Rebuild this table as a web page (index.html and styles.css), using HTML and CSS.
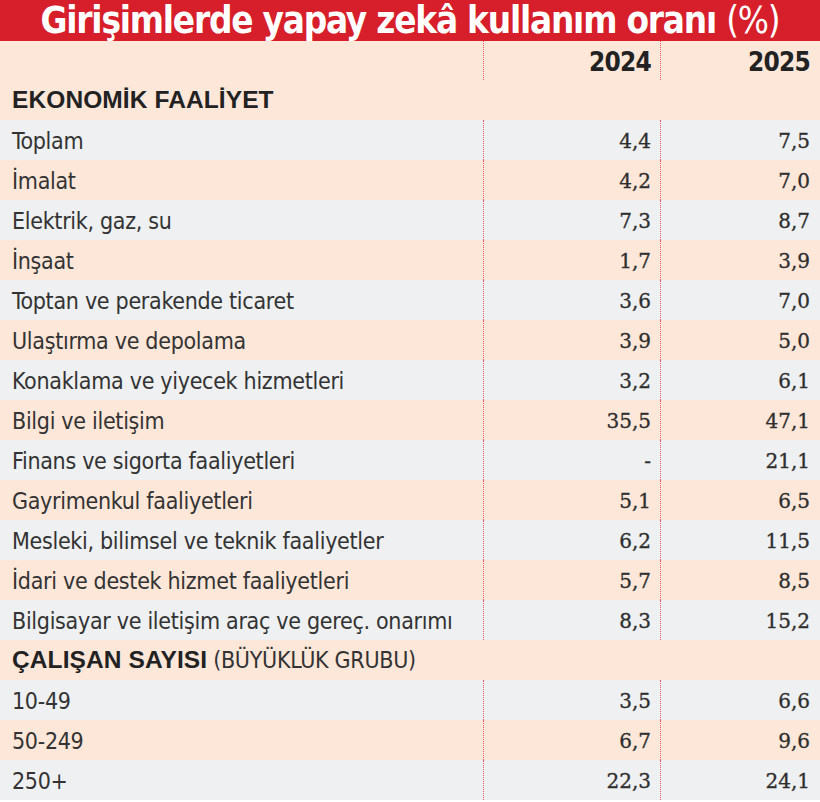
FILE: index.html
```html
<!DOCTYPE html>
<html lang="tr">
<head>
<meta charset="utf-8">
<link rel="stylesheet" href="styles.css">
</head>
<body>
<div class="chart">
  <div class="title">Girişimlerde yapay zekâ kullanım oranı <span class="pct">(%)</span></div>
  <div class="row head peach"><div class="lab"></div><div class="num yr">2024</div><div class="num yr">2025</div></div>
  <div class="row section peach"><div class="lab"><b>EKONOMİK FAALİYET</b></div></div>
  <div class="row gray"><div class="lab">Toplam</div><div class="num">4,4</div><div class="num">7,5</div></div>
  <div class="row peach"><div class="lab">İmalat</div><div class="num">4,2</div><div class="num">7,0</div></div>
  <div class="row gray"><div class="lab">Elektrik, gaz, su</div><div class="num">7,3</div><div class="num">8,7</div></div>
  <div class="row peach"><div class="lab">İnşaat</div><div class="num">1,7</div><div class="num">3,9</div></div>
  <div class="row gray"><div class="lab">Toptan ve perakende ticaret</div><div class="num">3,6</div><div class="num">7,0</div></div>
  <div class="row peach"><div class="lab">Ulaştırma ve depolama</div><div class="num">3,9</div><div class="num">5,0</div></div>
  <div class="row gray"><div class="lab">Konaklama ve yiyecek hizmetleri</div><div class="num">3,2</div><div class="num">6,1</div></div>
  <div class="row peach"><div class="lab">Bilgi ve iletişim</div><div class="num">35,5</div><div class="num">47,1</div></div>
  <div class="row gray"><div class="lab">Finans ve sigorta faaliyetleri</div><div class="num">-</div><div class="num">21,1</div></div>
  <div class="row peach"><div class="lab">Gayrimenkul faaliyetleri</div><div class="num">5,1</div><div class="num">6,5</div></div>
  <div class="row gray"><div class="lab">Mesleki, bilimsel ve teknik faaliyetler</div><div class="num">6,2</div><div class="num">11,5</div></div>
  <div class="row peach"><div class="lab">İdari ve destek hizmet faaliyetleri</div><div class="num">5,7</div><div class="num">8,5</div></div>
  <div class="row gray"><div class="lab">Bilgisayar ve iletişim araç ve gereç. onarımı</div><div class="num">8,3</div><div class="num">15,2</div></div>
  <div class="row section peach"><div class="lab"><b>ÇALIŞAN SAYISI</b> (BÜYÜKLÜK GRUBU)</div></div>
  <div class="row gray"><div class="lab">10-49</div><div class="num">3,5</div><div class="num">6,6</div></div>
  <div class="row peach"><div class="lab">50-249</div><div class="num">6,7</div><div class="num">9,6</div></div>
  <div class="row gray"><div class="lab">250+</div><div class="num">22,3</div><div class="num">24,1</div></div>
</div>
</body>
</html>
```
FILE: styles.css
```css
html, body { margin: 0; padding: 0; background: #fff; }
.chart { width: 820px; }
.title {
  height: 41px;
  background: #d71f2b;
  color: #fff;
  font-family: "DejaVu Sans Condensed", "DejaVu Sans", sans-serif;
  font-weight: bold;
  font-size: 36.5px;
  line-height: 41px;
  text-align: center;
  letter-spacing: -1.2px;
  white-space: nowrap;
}
.title .pct { font-weight: normal; }
.row {
  display: grid;
  grid-template-columns: 483px 177px 1fr;
  height: 40px;
  align-items: stretch;
}
.row.head { height: 39px; }
.peach { background: #fde7d9; }
.gray { background: #eef0f1; }
.lab {
  font-family: "Liberation Sans Narrow", "DejaVu Sans Condensed", sans-serif;
  font-size: 23px;
  color: #333;
  padding: 2px 0 0 12px;
  display: flex;
  align-items: center;
  white-space: nowrap;
  letter-spacing: -0.3px;
}
.section .lab { grid-column: 1 / 4; padding-top: 0; }
.lab b {
  font-family: "Liberation Sans", Arial, sans-serif;
  font-weight: bold;
  font-size: 24.5px;
  letter-spacing: 0.1px;
  color: #222;
  margin-right: 6px;
}
.num {
  font-family: "DejaVu Serif", serif;
  font-size: 20px;
  color: #2e2e2e;
  -webkit-text-stroke: 0.3px #2e2e2e;
  border-left: 1px dotted #e0566a;
  display: flex;
  align-items: center;
  justify-content: flex-end;
  padding: 2px 9px 0 0;
}
.num:last-child { padding-right: 10px; }
.num.yr {
  font-family: "DejaVu Sans Condensed", "DejaVu Sans", sans-serif;
  font-weight: bold;
  font-size: 26px;
  color: #222;
  letter-spacing: -0.8px;
  -webkit-text-stroke: 0;
}
```
